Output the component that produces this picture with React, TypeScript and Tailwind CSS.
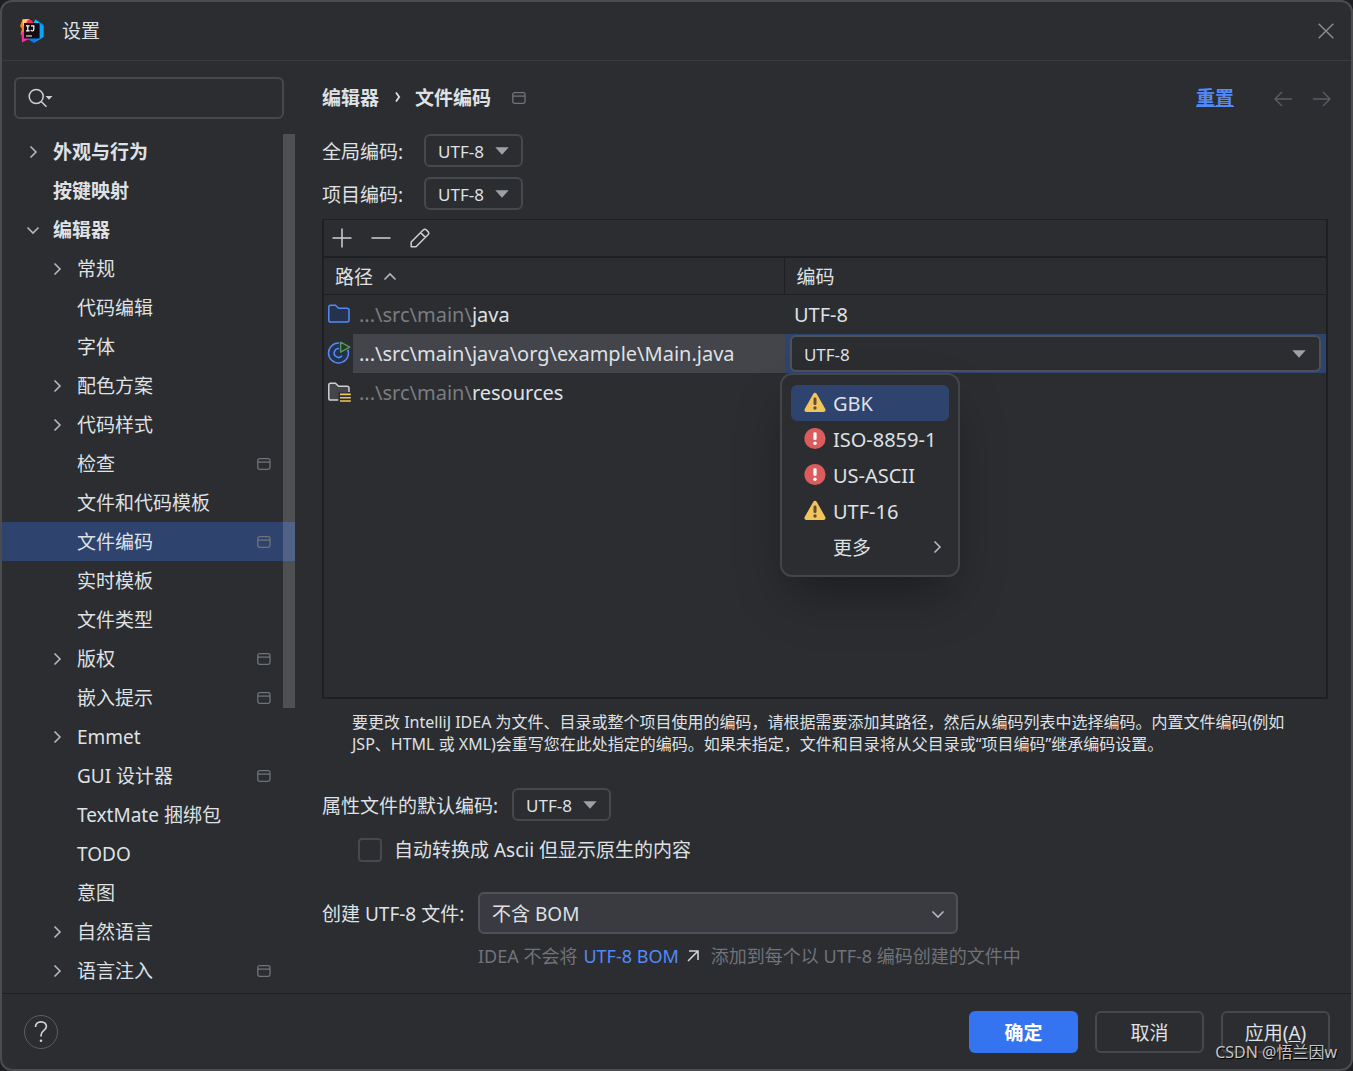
import { useState, type ReactNode } from 'react'
import clsx from 'clsx'

type TreeItem = {
  name: string
  level: 0 | 1
  arrow?: 'right' | 'down'
  project?: boolean
}

const tree: TreeItem[] = [
  { name: '外观与行为', level: 0, arrow: 'right' },
  { name: '按键映射', level: 0 },
  { name: '编辑器', level: 0, arrow: 'down' },
  { name: '常规', level: 1, arrow: 'right' },
  { name: '代码编辑', level: 1 },
  { name: '字体', level: 1 },
  { name: '配色方案', level: 1, arrow: 'right' },
  { name: '代码样式', level: 1, arrow: 'right' },
  { name: '检查', level: 1, project: true },
  { name: '文件和代码模板', level: 1 },
  { name: '文件编码', level: 1, project: true },
  { name: '实时模板', level: 1 },
  { name: '文件类型', level: 1 },
  { name: '版权', level: 1, arrow: 'right', project: true },
  { name: '嵌入提示', level: 1, project: true },
  { name: 'Emmet', level: 1, arrow: 'right' },
  { name: 'GUI 设计器', level: 1, project: true },
  { name: 'TextMate 捆绑包', level: 1 },
  { name: 'TODO', level: 1 },
  { name: '意图', level: 1 },
  { name: '自然语言', level: 1, arrow: 'right' },
  { name: '语言注入', level: 1, arrow: 'right', project: true },
]

const menuItems = [
  { name: 'GBK', icon: WarningIcon },
  { name: 'ISO-8859-1', icon: ErrorIcon },
  { name: 'US-ASCII', icon: ErrorIcon },
  { name: 'UTF-16', icon: WarningIcon },
]

const encodings = ['UTF-8', 'GBK', 'ISO-8859-1', 'US-ASCII', 'UTF-16']

function Chevron({ dir, className }: { dir: 'right' | 'down' | 'up'; className?: string }) {
  const paths = {
    right: 'M7.5 4.5 L13 10 L7.5 15.5',
    down: 'M4.5 7.5 L10 13 L15.5 7.5',
    up: 'M4.5 12.5 L10 7 L15.5 12.5',
  }
  return (
    <svg viewBox="0 0 20 20" className={clsx('size-5 shrink-0', className)} fill="none" stroke="#b4b8bf" strokeWidth="1.6">
      <path d={paths[dir]} />
    </svg>
  )
}

function ProjectIcon() {
  return (
    <svg viewBox="0 0 14 12" className="h-3 w-[14px] shrink-0" fill="none" stroke="#6f737a" strokeWidth="1.3">
      <rect x="0.8" y="0.7" width="12.2" height="10.6" rx="1.8" />
      <path d="M1 4.1 H13" />
    </svg>
  )
}

function WarningIcon() {
  return (
    <svg viewBox="0 0 24 24" className="size-6 shrink-0">
      <path d="M10.2 2.9 C11 1.5 13 1.5 13.8 2.9 L22.3 18 C23.1 19.4 22.1 21 20.5 21 H3.5 C1.9 21 0.9 19.4 1.7 18 Z" fill="#f2c55c" />
      <rect x="10.5" y="6.6" width="3" height="7.4" rx="1.3" fill="#5e4d33" />
      <circle cx="12" cy="17" r="1.7" fill="#5e4d33" />
    </svg>
  )
}

function ErrorIcon() {
  return (
    <svg viewBox="0 0 24 24" className="size-6 shrink-0">
      <circle cx="12" cy="11.5" r="10.6" fill="#db5c5c" />
      <rect x="10.4" y="5.3" width="3.2" height="7.8" rx="1.3" fill="#fff" />
      <circle cx="12" cy="16.3" r="1.7" fill="#fff" />
    </svg>
  )
}

function FolderIcon() {
  return (
    <svg viewBox="0 0 24 24" className="size-6" fill="#25324d" stroke="#548af7" strokeWidth="1.5">
      <path d="M1.8 5 Q1.8 3.2 3.6 3.2 H8.4 L11.6 6.2 H20 Q22 6.2 22 8 V18 Q22 20 20 20 H3.6 Q1.8 20 1.8 18.2 Z" />
    </svg>
  )
}

function ClassIcon() {
  return (
    <svg viewBox="0 0 24 24" className="size-6" fill="none">
      <circle cx="11.5" cy="12" r="10" fill="#25324d" stroke="#548af7" strokeWidth="1.5" />
      <path d="M15 14.8 A4.4 4.4 0 1 1 13 7.8" stroke="#548af7" strokeWidth="1.6" />
      <path d="M13.6 1.2 V11.2 L22.4 6.2 Z" fill="#253627" stroke="#2b2d30" strokeWidth="3" />
      <path d="M13.6 1.2 V11.2 L22.8 6.2 Z" fill="#253627" stroke="#57965c" strokeWidth="1.5" strokeLinejoin="round" />
    </svg>
  )
}

function ResourcesIcon() {
  return (
    <svg viewBox="0 0 24 24" className="size-6" fill="none">
      <path
        d="M11.5 20 H3.6 Q1.8 20 1.8 18.2 V5 Q1.8 3.2 3.6 3.2 H8.4 L11.6 6.2 H20 Q22 6.2 22 8 V12"
        fill="#43454a"
        stroke="#ced0d6"
        strokeWidth="1.5"
      />
      <path d="M11.5 12.5 H24 V22 H11.5 Z" fill="#2b2d30" />
      <path d="M13 14.4 H23.8 M13 17.7 H23.8 M13 21 H23.8" stroke="#f2c55c" strokeWidth="1.6" />
    </svg>
  )
}

function Logo() {
  return (
    <svg viewBox="0 0 24 24" className="size-6">
      <path d="M2.5 0.5 L9 0 L13 4 L6 18 L0.5 15 L2 10 L0 7 Z" fill="#fc801d" />
      <path d="M2.5 0.5 L9 0 L11 5 L3 7 Z" fill="#fdd06d" />
      <path d="M8 0.5 L12 1.5 L14 6 L5 6 Z" fill="#fe2857" />
      <path d="M1.5 13.5 L5 12 L12 19 L7 21 L2 23.5 Z" fill="#fe2c9a" />
      <path d="M15.5 0.5 L23.5 5.5 L24 18 L14 24 L8.5 20.5 L13 5 Z" fill="#087cfa" />
      <path d="M15.5 0.5 L20 4 L18 8 L13 5 Z" fill="#07c3f2" />
      <path d="M20 5 L23.5 7 L23 18 L14.5 23 L20 18 Z" fill="#07a6fb" />
      <rect x="4" y="4" width="15.5" height="15.5" fill="#140a12" />
      <path d="M6 6.8 H9.6 M7.8 6.8 V11.8 M6 11.8 H9.6 M11 6.8 H13.8 V10.3 Q13.8 12 12.4 12 Q11.4 12 10.8 11.2 M6 17 H12" fill="none" stroke="#fff" strokeWidth="1.2" />
    </svg>
  )
}

function Triangle({ className }: { className?: string }) {
  return (
    <svg viewBox="0 0 14 8" className={clsx('pointer-events-none absolute h-2 w-[14px]', className)}>
      <path d="M0.3 0.3 H13.7 L7 7.8 Z" fill="#9da0a8" />
    </svg>
  )
}

function EncodingSelect({ id }: { id: string }) {
  return (
    <div className="relative">
      <select
        id={id}
        className="block h-[33px] w-[99px] appearance-none rounded-md border-2 border-[#45484d] bg-transparent pl-3 pt-[3px] text-[17px] leading-5 outline-none"
      >
        {encodings.map((e) => (
          <option key={e}>{e}</option>
        ))}
      </select>
      <Triangle className="right-[14px] top-[13px]" />
    </div>
  )
}

function PathCell({ icon, dim, name, active }: { icon: ReactNode; dim?: string; name: string; active?: boolean }) {
  return (
    <td className="p-0">
      <div className="flex h-[39px] items-center pl-[3px]">
        {icon}
        <span className={clsx('ml-[2px] flex h-full flex-1 items-center pl-[6px] pt-[2px]', active && 'bg-[#43454a]')}>
          <span className="text-[#7a7d82]">{dim}</span>
          {name}
        </span>
      </div>
    </td>
  )
}

function EncodingMenu() {
  const [hovered, setHovered] = useState('GBK')

  return (
    <div
      role="menu"
      className="absolute -left-[5px] top-full z-10 w-[180px] rounded-xl border-2 border-[#43454a] bg-[#2b2d30] px-[9px] py-[10px] shadow-2xl shadow-black/40"
    >
      {menuItems.map((item) => (
        <button
          key={item.name}
          role="menuitem"
          onMouseEnter={() => setHovered(item.name)}
          className={clsx('flex h-9 w-full items-center gap-[6px] rounded-md pl-3', hovered === item.name && 'bg-[#2e436e]')}
        >
          <item.icon />
          <span className="pt-[2px]">{item.name}</span>
        </button>
      ))}
      <button role="menuitem" className="flex h-9 w-full items-center justify-between pl-[42px] pr-[2px] text-[19px]">
        <span className="pt-[2px]">更多</span>
        <Chevron dir="right" />
      </button>
    </div>
  )
}

export default function App() {
  const [selected, setSelected] = useState('文件编码')
  const [ascii, setAscii] = useState(false)

  return (
    <div className="min-h-screen bg-[#1e1f22] font-['Noto_Sans','Noto_Sans_CJK_SC',sans-serif] text-[19px] leading-6 text-[#dfe1e5]">
      <div className="relative flex min-h-screen flex-col rounded-xl border-2 border-[#4a4c4f] bg-[#2b2d30]">
        {/* Title bar */}
        <header className="flex h-[59px] items-center border-b border-[#393b40] pl-[18px] pr-[17px]">
          <Logo />
          <h1 className="ml-[18px]">设置</h1>
          <button aria-label="关闭" className="ml-auto">
            <svg viewBox="0 0 16 16" className="size-4" stroke="#8c8e92" strokeWidth="1.4">
              <path d="M0.7 0.7 L15.3 15.3 M15.3 0.7 L0.7 15.3" />
            </svg>
          </button>
        </header>

        <div className="flex flex-1">
          {/* Sidebar */}
          <aside className="w-[293px] shrink-0 pt-4">
            <div className="relative mx-3 w-[270px]">
              <input
                type="text"
                aria-label="搜索"
                className="block h-[42px] w-full rounded-md border-2 border-[#45484d] bg-transparent pl-12 pr-3 outline-none"
              />
              <svg viewBox="0 0 26 20" className="pointer-events-none absolute left-[14px] top-[11px] h-5 w-[26px]" fill="none">
                <circle cx="8.2" cy="8.5" r="7" stroke="#ced0d6" strokeWidth="1.5" />
                <path d="M13.2 13.5 L18.5 18.8" stroke="#ced0d6" strokeWidth="1.5" />
                <path d="M17.5 8 H24.5 L21 11.8 Z" fill="#ced0d6" />
              </svg>
            </div>

            <nav className="relative mt-[13px]">
              {tree.map((item) => (
                <button
                  key={item.name}
                  onClick={() => setSelected(item.name)}
                  className={clsx(
                    'flex h-[39px] w-full items-center gap-[10px] pr-6 text-left',
                    item.level === 0 ? 'pl-[21px] font-bold' : 'pl-[45px]',
                    item.name === selected && 'bg-[#2e436e]'
                  )}
                >
                  {item.arrow ? <Chevron dir={item.arrow} /> : <span className="w-5" />}
                  <span className="flex-1">{item.name}</span>
                  {item.project && <ProjectIcon />}
                </button>
              ))}
              <div className="pointer-events-none absolute right-0 top-[2px] h-[574px] w-3 bg-white/17" />
            </nav>
          </aside>

          {/* Settings page */}
          <main className="min-w-0 flex-1 pb-6 pl-[27px] pr-[23px] pt-4">
            <div className="flex h-[42px] items-center">
              <h2 className="flex items-center font-bold">
                编辑器
                <svg viewBox="0 0 8 14" className="mx-[14px] h-[14px] w-2" fill="none" stroke="#dfe1e5" strokeWidth="1.8">
                  <path d="M3 1.5 L6.2 6 L3 10.5" />
                </svg>
                文件编码
              </h2>
              <span className="ml-[21px]">
                <ProjectIcon />
              </span>
              <a href="#reset" className="ml-auto font-bold text-[#548af7] underline">
                重置
              </a>
              <button aria-label="后退" className="ml-10">
                <svg viewBox="0 0 18 16" className="h-4 w-[18px]" fill="none" stroke="#5a5d63" strokeWidth="1.4">
                  <path d="M18 9 H1 M8 2 L1 9 L8 16" />
                </svg>
              </button>
              <button aria-label="前进" className="-mr-[3px] ml-[21px]">
                <svg viewBox="0 0 18 16" className="h-4 w-[18px]" fill="none" stroke="#5a5d63" strokeWidth="1.4">
                  <path d="M0 9 H17 M10 2 L17 9 L10 16" />
                </svg>
              </button>
            </div>

            <div className="mt-[15px] flex items-center">
              <label htmlFor="global" className="w-[102px] pt-[2px]">全局编码:</label>
              <EncodingSelect id="global" />
            </div>
            <div className="mt-[10px] flex items-center">
              <label htmlFor="project" className="w-[102px] pt-[2px]">项目编码:</label>
              <EncodingSelect id="project" />
            </div>

            {/* Path table */}
            <div className="mt-[9px] min-h-[480px] border-2 border-t border-[#1e1f22]">
              <div className="flex h-[38px] items-center gap-[19px] border-b-2 border-[#1e1f22] pl-2">
                <button aria-label="添加">
                  <svg viewBox="0 0 20 20" className="size-5" stroke="#ced0d6" strokeWidth="1.5">
                    <path d="M10 0.5 V19.5 M0.5 10 H19.5" />
                  </svg>
                </button>
                <button aria-label="移除">
                  <svg viewBox="0 0 20 20" className="size-5" stroke="#ced0d6" strokeWidth="1.5">
                    <path d="M0.5 10 H19.5" />
                  </svg>
                </button>
                <button aria-label="编辑">
                  <svg viewBox="0 0 20 20" className="size-5" fill="none" stroke="#ced0d6" strokeWidth="1.5" strokeLinejoin="round">
                    <path d="M1.2 18.8 V14 L13.2 2 Q14.8 0.5 16.4 2 L18 3.6 Q19.5 5.2 18 6.8 L6 18.8 Z M10.6 4.6 L15.4 9.4" />
                  </svg>
                </button>
              </div>
              <table className="w-full table-fixed border-collapse">
                <thead>
                  <tr className="h-9 border-b border-[#1e1f22] text-left">
                    <th className="w-[46%] border-r border-[#1e1f22] p-0 pl-[11px] pt-[2px] font-normal">
                      <span className="flex items-center gap-[7px]">
                        路径
                        <Chevron dir="up" />
                      </span>
                    </th>
                    <th className="p-0 pl-[11px] pt-[2px] font-normal">编码</th>
                  </tr>
                </thead>
                <tbody className="text-xl leading-6">
                  <tr>
                    <PathCell icon={<FolderIcon />} dim="...\src\main\" name="java" />
                    <td className="p-0 pl-[9px] pt-[2px]">UTF-8</td>
                  </tr>
                  <tr>
                    <PathCell icon={<ClassIcon />} name="...\src\main\java\org\example\Main.java" active />
                    <td className="p-0">
                      <div className="relative h-[39px] bg-[#2e436e] py-[1px] pl-[5px] pr-[5px]">
                        <select
                          aria-label="编码"
                          className="block h-[37px] w-full appearance-none rounded-md border-2 border-[#4e5157] bg-[#2b2d30] pl-3 pt-[3px] text-[17px] leading-5 outline-none"
                        >
                          {encodings.map((e) => (
                            <option key={e}>{e}</option>
                          ))}
                        </select>
                        <Triangle className="right-5 top-4" />
                        <EncodingMenu />
                      </div>
                    </td>
                  </tr>
                  <tr>
                    <PathCell icon={<ResourcesIcon />} dim="...\src\main\" name="resources" />
                    <td className="p-0" />
                  </tr>
                </tbody>
              </table>
            </div>

            <p className="mt-3 pl-[30px] text-base leading-[22px]">
              要更改 IntelliJ IDEA 为文件、目录或整个项目使用的编码，请根据需要添加其路径，然后从编码列表中选择编码。内置文件编码(例如
              <br />
              JSP、HTML 或 XML)会重写您在此处指定的编码。如果未指定，文件和目录将从父目录或“项目编码”继承编码设置。
            </p>

            <div className="mt-[33px] flex items-center gap-[14px]">
              <label htmlFor="props" className="pt-[2px]">属性文件的默认编码:</label>
              <EncodingSelect id="props" />
            </div>
            <label className="ml-9 mt-3 flex h-[33px] items-center gap-3">
              <input
                type="checkbox"
                checked={ascii}
                onChange={(e) => setAscii(e.target.checked)}
                className="size-6 appearance-none rounded border-2 border-[#45484d] checked:bg-[#3574f0]"
              />
              自动转换成 Ascii 但显示原生的内容
            </label>

            <div className="mt-[26px] grid grid-cols-[148px_480px_1fr] items-center gap-x-2 gap-y-[10px]">
              <label htmlFor="bom" className="pt-[2px]">创建 UTF-8 文件:</label>
              <div className="relative">
                <select
                  id="bom"
                  className="block h-[42px] w-full appearance-none rounded-md border-2 border-[#4e5157] bg-[#393b40] pl-3 pt-[2px] outline-none"
                >
                  <option>不含 BOM</option>
                  <option>含 BOM</option>
                </select>
                <Chevron dir="down" className="pointer-events-none absolute right-[10px] top-3" />
              </div>
              <p className="col-span-2 col-start-2 flex items-center text-lg leading-6 text-[#6f737a]">
                IDEA 不会将
                <a href="#bom" className="ml-[6px] flex items-center gap-2 text-[#548af7]">
                  UTF-8 BOM
                  <svg viewBox="0 0 12 12" className="size-3" fill="none" stroke="#ced0d6" strokeWidth="1.6">
                    <path d="M2 1 H11 V10 M11 1 L1 11" />
                  </svg>
                </a>
                <span className="ml-3">添加到每个以 UTF-8 编码创建的文件中</span>
              </p>
            </div>
          </main>
        </div>

        {/* Footer */}
        <footer className="flex items-center gap-[17px] border-t border-[#1e1f22] pb-4 pl-[22px] pr-[21px] pt-[17px]">
          <button aria-label="帮助" className="mr-auto flex size-[34px] items-center justify-center rounded-full border border-[#5a5d63]">
            <svg viewBox="0 0 14 24" className="h-6 w-[14px]" fill="none" stroke="#ced0d6" strokeWidth="1.7">
              <path d="M1.5 7 C1.5 3.6 3.8 1.8 7 1.8 C10.2 1.8 12.4 3.8 12.4 6.6 C12.4 10.4 7 10.6 7 15.2 V16.4" />
              <circle cx="7" cy="20.8" r="1.3" fill="#ced0d6" stroke="none" />
            </svg>
          </button>
          <button className="h-[42px] w-[109px] rounded-md bg-[#3574f0] pt-[2px] font-bold text-white">确定</button>
          <button className="h-[42px] w-[109px] rounded-md border-2 border-[#45484d] pt-[2px]">取消</button>
          <button className="h-[42px] w-[109px] rounded-md border-2 border-[#45484d] pt-[2px]">
            应用(<span className="underline">A</span>)
          </button>
        </footer>

        <div className="pointer-events-none absolute bottom-[5px] right-[14px] text-base text-[#c4c5c7] [text-shadow:1px_1px_1px_#000]">
          CSDN @悟兰因w
        </div>
      </div>
    </div>
  )
}
